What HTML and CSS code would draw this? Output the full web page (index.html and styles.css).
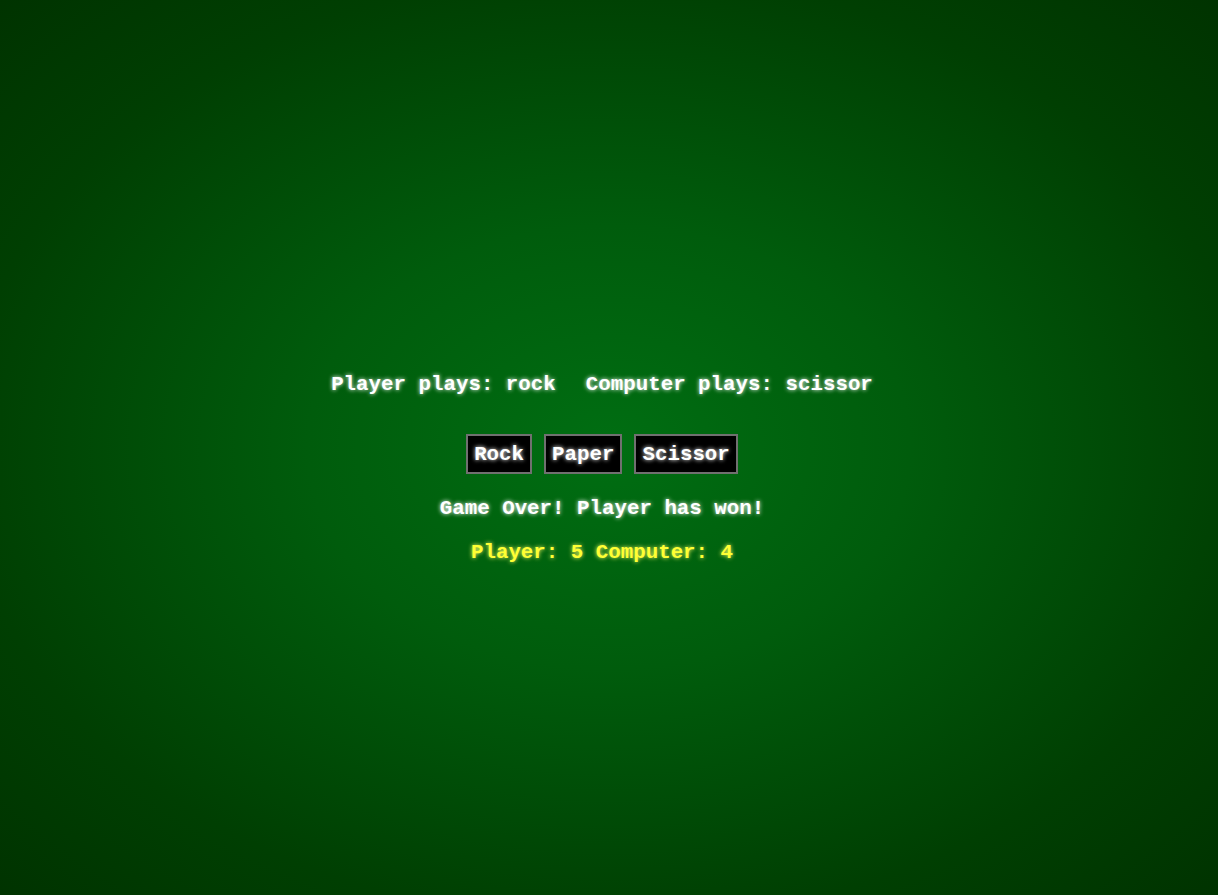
FILE: index.html
```html
<!DOCTYPE html>
<html>
<head>
<meta charset="utf-8">
<link rel="stylesheet" href="styles.css">
</head>
<body>
<main class="game">
  <div class="plays">
    <span class="play">Player plays: rock</span>
    <span class="play">Computer plays: scissor</span>
  </div>
  <div class="choices">
    <button class="choice">Rock</button>
    <button class="choice">Paper</button>
    <button class="choice">Scissor</button>
  </div>
  <p class="result">Game Over! Player has won!</p>
  <p class="score">Player: 5 Computer: 4</p>
</main>
</body>
</html>
```
FILE: styles.css
```css
html, body {
  margin: 0;
  height: 100%;
}
body {
  background: radial-gradient(ellipse at 50% 50%, #006e12 0%, #005c0c 35%, #003f02 75%, #003300 100%);
  font-family: "Liberation Mono", "Courier New", monospace;
  font-weight: bold;
  font-size: 20.8px;
  color: #fff;
}
.game {
  display: flex;
  flex-direction: column;
  align-items: center;
  padding-top: 373px;
  padding-right: 14px;
}
.plays {
  display: flex;
  gap: 30px;
  text-shadow: 0 0 4px #fff;
  line-height: 24px;
}
.choices {
  display: flex;
  gap: 12px;
  margin-top: 37px;
}
.choice {
  font: inherit;
  color: #fff;
  background: #000;
  border: 2px solid #707070;
  height: 40px;
  padding: 0 6px;
  text-shadow: 0 0 4px #fff;
  cursor: pointer;
}
.result {
  margin: 23px 0 0;
  line-height: 24px;
  text-shadow: 0 0 4px #fff;
}
.score {
  margin: 20px 0 0;
  line-height: 24px;
  color: #ffff33;
  text-shadow: 0 0 4px #ffff66;
}
```
